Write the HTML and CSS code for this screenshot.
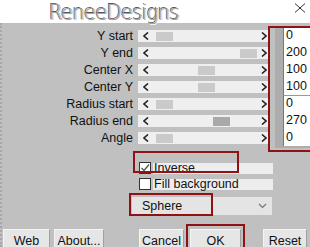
FILE: index.html
```html
<!DOCTYPE html>
<html>
<head>
<meta charset="utf-8">
<link rel="stylesheet" href="styles.css">
</head>
<body>
<div class="header">
  <div class="title">ReneeDesigns</div>
  <svg class="close" width="12" height="10" viewBox="0 0 12 10"><path d="M1 0.5 L11 9.5 M11 0.5 L1 9.5" stroke="#333" stroke-width="1" fill="none"/></svg>
</div>
<div class="panel">
  <div class="params">
    <div class="sliders">
      <div class="label">Y start</div>
      <div class="track"><span class="arr"><svg width="6" height="8" viewBox="0 0 6 8"><path d="M5 0.5 L1 4 L5 7.5" stroke="#222" stroke-width="1.6" fill="none"/></svg></span><span class="slot"><span class="thumb" style="margin-left:0px"></span></span><span class="arr r"><svg width="6" height="8" viewBox="0 0 6 8"><path d="M1 0.5 L5 4 L1 7.5" stroke="#222" stroke-width="1.6" fill="none"/></svg></span></div>
      <div class="label">Y end</div>
      <div class="track"><span class="arr"><svg width="6" height="8" viewBox="0 0 6 8"><path d="M5 0.5 L1 4 L5 7.5" stroke="#222" stroke-width="1.6" fill="none"/></svg></span><span class="slot"><span class="thumb" style="margin-left:84px"></span></span><span class="arr r"><svg width="6" height="8" viewBox="0 0 6 8"><path d="M1 0.5 L5 4 L1 7.5" stroke="#222" stroke-width="1.6" fill="none"/></svg></span></div>
      <div class="label">Center X</div>
      <div class="track"><span class="arr"><svg width="6" height="8" viewBox="0 0 6 8"><path d="M5 0.5 L1 4 L5 7.5" stroke="#222" stroke-width="1.6" fill="none"/></svg></span><span class="slot"><span class="thumb" style="margin-left:42px"></span></span><span class="arr r"><svg width="6" height="8" viewBox="0 0 6 8"><path d="M1 0.5 L5 4 L1 7.5" stroke="#222" stroke-width="1.6" fill="none"/></svg></span></div>
      <div class="label">Center Y</div>
      <div class="track"><span class="arr"><svg width="6" height="8" viewBox="0 0 6 8"><path d="M5 0.5 L1 4 L5 7.5" stroke="#222" stroke-width="1.6" fill="none"/></svg></span><span class="slot"><span class="thumb" style="margin-left:42px"></span></span><span class="arr r"><svg width="6" height="8" viewBox="0 0 6 8"><path d="M1 0.5 L5 4 L1 7.5" stroke="#222" stroke-width="1.6" fill="none"/></svg></span></div>
      <div class="label">Radius start</div>
      <div class="track"><span class="arr"><svg width="6" height="8" viewBox="0 0 6 8"><path d="M5 0.5 L1 4 L5 7.5" stroke="#222" stroke-width="1.6" fill="none"/></svg></span><span class="slot"><span class="thumb" style="margin-left:0px"></span></span><span class="arr r"><svg width="6" height="8" viewBox="0 0 6 8"><path d="M1 0.5 L5 4 L1 7.5" stroke="#222" stroke-width="1.6" fill="none"/></svg></span></div>
      <div class="label">Radius end</div>
      <div class="track"><span class="arr"><svg width="6" height="8" viewBox="0 0 6 8"><path d="M5 0.5 L1 4 L5 7.5" stroke="#222" stroke-width="1.6" fill="none"/></svg></span><span class="slot"><span class="thumb dark" style="margin-left:57px"></span></span><span class="arr r"><svg width="6" height="8" viewBox="0 0 6 8"><path d="M1 0.5 L5 4 L1 7.5" stroke="#222" stroke-width="1.6" fill="none"/></svg></span></div>
      <div class="label">Angle</div>
      <div class="track"><span class="arr"><svg width="6" height="8" viewBox="0 0 6 8"><path d="M5 0.5 L1 4 L5 7.5" stroke="#222" stroke-width="1.6" fill="none"/></svg></span><span class="slot"><span class="thumb" style="margin-left:0px"></span></span><span class="arr r"><svg width="6" height="8" viewBox="0 0 6 8"><path d="M1 0.5 L5 4 L1 7.5" stroke="#222" stroke-width="1.6" fill="none"/></svg></span></div>
    </div>
    <div class="values">
      <div class="val">0</div>
      <div class="val">200</div>
      <div class="val">100</div>
      <div class="val">100</div>
      <div class="val sep">0</div>
      <div class="val">270</div>
      <div class="val">0</div>
    </div>
  </div>
  <div class="options">
    <div class="opt"><span class="cb"><svg width="10" height="10" viewBox="0 0 10 10"><path d="M1.5 5 L4 7.5 L9 1.5" stroke="#555" stroke-width="1.3" fill="none"/></svg></span><span class="opt-text">Inverse</span></div>
    <div class="opt"><span class="cb"></span><span class="opt-text">Fill background</span></div>
  </div>
  <div class="select">
    <span class="sel-text">Sphere</span>
    <svg class="chev" width="9" height="6" viewBox="0 0 9 6"><path d="M1 1 L4.5 4.5 L8 1" stroke="#777" stroke-width="1.2" fill="none"/></svg>
  </div>
  <div class="buttons">
    <div class="btn b-web">Web</div>
    <div class="btn b-about">About...</div>
    <div class="btn b-cancel">Cancel</div>
    <div class="btn b-ok">OK</div>
    <div class="btn b-reset">Reset</div>
  </div>
  <div class="hl hl-values"></div>
  <div class="hl hl-inverse"></div>
  <div class="hl hl-sphere"></div>
  <div class="hl hl-ok"></div>
</div>
</body>
</html>
```

FILE: styles.css
```css
* { box-sizing: border-box; }
html, body {
  margin: 0;
  padding: 0;
  width: 310px;
  height: 247px;
  overflow: hidden;
  background: #c0c0c0;
  font-family: "Liberation Sans Narrow", "Liberation Sans", Arial, sans-serif;
  font-size: 12.5px;
  color: #111;
}
.header {
  height: 23px;
  background: #fff;
  display: flex;
  align-items: flex-start;
  position: relative;
}
.title {
  margin-left: 49px;
  margin-top: 1px;
  font-family: "DejaVu Sans", sans-serif;
  font-weight: 200;
  font-size: 21px;
  line-height: 24px;
  letter-spacing: -0.6px;
  color: #a8a8a8;
  text-shadow: -1px -1px 0 #555, 1px 1px 0 #fff, 1px 0 0 #777;
  transform: scaleX(0.92);
  transform-origin: left center;
}
.close {
  margin-left: auto;
  margin-right: 4px;
  margin-top: 3px;
}
.panel {
  position: relative;
  height: 224px;
  border-left: 2px dotted #a8a8a8;
  margin-left: 0;
}
.params {
  display: flex;
  padding-top: 5px;
}
.sliders {
  display: grid;
  grid-template-columns: 131px 132px;
  column-gap: 5px;
  grid-auto-rows: 17px;
}
.label {
  text-align: right;
  line-height: 17px;
  white-space: nowrap;
}
.track {
  margin-top: 2px;
  height: 12px;
  background: #efefef;
  display: flex;
  align-items: center;
}
.arr {
  width: 18px;
  display: flex;
  align-items: center;
  padding-left: 5px;
}
.arr.r {
  width: 12px;
  padding-left: 3px;
}
.slot {
  flex: 1;
  display: flex;
  align-items: center;
  height: 12px;
}
.thumb {
  width: 17px;
  height: 9px;
  background: #cacaca;
}
.thumb.dark { background: #a9a9a9; }
.values {
  margin-left: 5px;
  padding-left: 8px;
  background: #adadad;
  flex: 1;
  padding-top: 0;
  height: 121px;
  margin-top: -1px;
}
.val {
  height: 17px;
  line-height: 17px;
  background: #fff;
  border-left: 1px solid #777;
  padding-left: 2px;
  font-size: 12.5px;
}
.val.sep { border-top: 1px solid #999; line-height: 15px; }
.options {
  margin-left: 137px;
  margin-top: 12px;
  width: 134px;
}
.opt {
  height: 16px;
  display: flex;
  align-items: center;
}
.cb {
  width: 12px;
  height: 12px;
  border: 1px solid #333;
  background: #fff;
  display: flex;
  align-items: center;
  justify-content: center;
  flex: none;
}
.opt-text {
  margin-left: 2px;
  flex: 1;
  height: 11px;
  line-height: 11px;
  background: #ededed;
  padding-left: 1px;
}
.select {
  margin-left: 130px;
  margin-top: 5px;
  width: 140px;
  height: 18px;
  background: #e4e4e4;
  display: flex;
  align-items: center;
  padding-left: 10px;
  padding-right: 5px;
}
.sel-text { flex: 1; }
.buttons {
  display: flex;
  margin-top: 14px;
}
.btn {
  height: 24px;
  background: #e6e6e6;
  border: 1px solid #f4f4f4;
  border-right-color: #a0a0a0;
  text-align: center;
  line-height: 22px;
  flex: none;
}
.b-web { width: 47px; margin-left: 1px; }
.b-about { width: 50px; margin-left: 4px; }
.b-cancel { width: 45px; margin-left: 35px; }
.b-ok { width: 51px; margin-left: 6px; }
.b-reset { width: 44px; margin-left: 22px; }
.hl {
  position: absolute;
  border: 2px solid #8f1313;
}
.hl-values { left: 266px; top: 3px; width: 50px; height: 126px; }
.hl-inverse { left: 131px; top: 128px; width: 106px; height: 22px; }
.hl-sphere { left: 127px; top: 170px; width: 84px; height: 23px; }
.hl-ok { left: 184px; top: 201px; width: 59px; height: 30px; }
```
